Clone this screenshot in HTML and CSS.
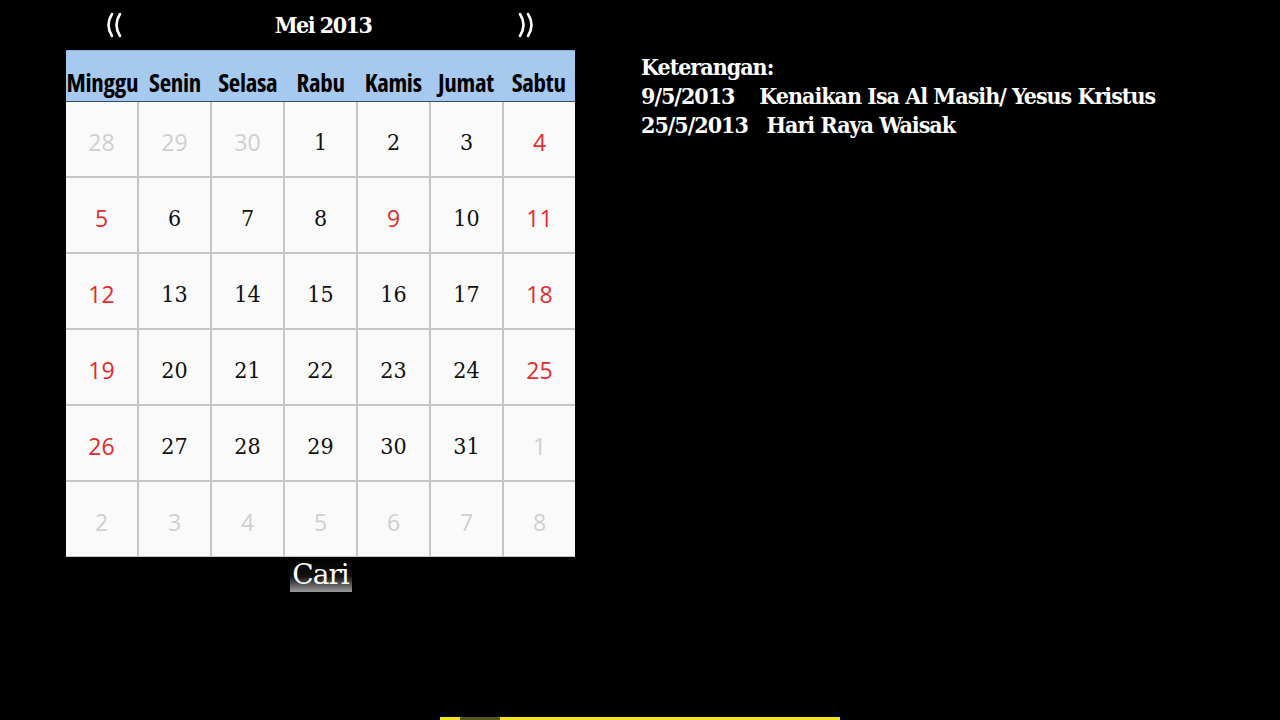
FILE: index.html
```html
<!DOCTYPE html>
<html>
<head>
<meta charset="utf-8">
<link rel="stylesheet" href="styles.css">
</head>
<body>
<div class="screen">
  <div class="left">
    <div class="nav">
      <span class="arrow"><svg width="18" height="26" viewBox="0 0 18 26"><path d="M7 2 Q0 13 7 24 M15 2 Q8 13 15 24" fill="none" stroke="#fff" stroke-width="2.6" stroke-linecap="round"/></svg></span>
      <span class="title">Mei 2013</span>
      <span class="arrow"><svg width="18" height="26" viewBox="0 0 18 26"><path d="M3 2 Q10 13 3 24 M11 2 Q18 13 11 24" fill="none" stroke="#fff" stroke-width="2.6" stroke-linecap="round"/></svg></span>
    </div>
    <div class="cal">
      <div class="head">
        <span>Minggu</span><span>Senin</span><span>Selasa</span><span>Rabu</span><span>Kamis</span><span>Jumat</span><span>Sabtu</span>
      </div>
      <div class="grid">
        <div class="c out">28</div><div class="c out">29</div><div class="c out">30</div><div class="c">1</div><div class="c">2</div><div class="c">3</div><div class="c red">4</div>
        <div class="c red">5</div><div class="c">6</div><div class="c">7</div><div class="c">8</div><div class="c red">9</div><div class="c">10</div><div class="c red">11</div>
        <div class="c red">12</div><div class="c">13</div><div class="c">14</div><div class="c">15</div><div class="c">16</div><div class="c">17</div><div class="c red">18</div>
        <div class="c red">19</div><div class="c">20</div><div class="c">21</div><div class="c">22</div><div class="c">23</div><div class="c">24</div><div class="c red">25</div>
        <div class="c red">26</div><div class="c">27</div><div class="c">28</div><div class="c">29</div><div class="c">30</div><div class="c">31</div><div class="c out">1</div>
        <div class="c out">2</div><div class="c out">3</div><div class="c out">4</div><div class="c out">5</div><div class="c out">6</div><div class="c out">7</div><div class="c out">8</div>
      </div>
    </div>
    <div class="btnrow"><button class="cari">Cari</button></div>
  </div>
  <div class="info">
    <div>Keterangan:</div>
    <div>9/5/2013&nbsp;&nbsp;&nbsp; Kenaikan Isa Al Masih/ Yesus Kristus</div>
    <div>25/5/2013&nbsp;&nbsp; Hari Raya Waisak</div>
  </div>
</div>
<div class="bottombar"><span class="dark"></span></div>
</body>
</html>
```
FILE: styles.css
```css
html, body {
  margin: 0;
  padding: 0;
  background: #000;
  width: 1280px;
  height: 720px;
  overflow: hidden;
  position: relative;
}
.screen {
  display: flex;
  padding-left: 66px;
}
.left {
  width: 509px;
  display: flex;
  flex-direction: column;
}
.nav {
  height: 50px;
  display: flex;
  align-items: center;
  justify-content: space-between;
  padding: 0 40px 0 39px;
  color: #fff;
}
.arrow {
  display: flex;
  width: 18px;
  height: 26px;
  margin-top: -1px;
}
.title {
  font-family: "DejaVu Serif Condensed", "DejaVu Serif", serif;
  font-weight: bold;
  font-size: 23px;
  letter-spacing: -1.5px;
  margin-left: 6px;
  margin-top: -2px;
}
.cal {
  background: #fafafa;
}
.head {
  height: 50px;
  background: #a6c9ef;
  border-top: 1px solid #8aaedc;
  border-bottom: 1px solid #3a4a60;
  display: grid;
  grid-template-columns: repeat(7, 1fr);
  align-items: center;
  font-family: "Open Sans", sans-serif;
  font-stretch: 75%;
  font-weight: bold;
  font-size: 25px;
  color: #000;
  text-align: center;
  letter-spacing: -0.3px;
}
.head span {
  padding-top: 12px;
}
.grid {
  display: grid;
  grid-template-columns: repeat(7, 71px);
  grid-auto-rows: 74px;
  gap: 2px;
  background: #c6c6c6;
  border-bottom: 1px solid #c6c6c6;
}
.c {
  background: #fafafa;
  display: flex;
  align-items: center;
  justify-content: center;
  padding-top: 5px;
  box-sizing: border-box;
  font-family: "DejaVu Serif Condensed", "DejaVu Serif", serif;
  font-size: 23px;
  color: #111;
}
.c.red {
  color: #e32b2b;
  font-family: "Open Sans", sans-serif;
  font-stretch: 95%;
  font-size: 23px;
}
.c.out {
  color: #cfcfcf;
  font-family: "Open Sans", sans-serif;
  font-stretch: 95%;
  font-size: 23px;
}
.btnrow {
  display: flex;
  justify-content: center;
}
.cari {
  width: 62px;
  height: 35px;
  border: none;
  padding: 0;
  background: linear-gradient(#000 0%, #111 55%, #9a9a9a 100%);
  color: #fff;
  font-family: "DejaVu Serif", serif;
  font-size: 28px;
  letter-spacing: -1px;
  line-height: 35px;
}
.info {
  margin-left: 66px;
  padding-top: 52px;
  color: #fff;
  font-family: "DejaVu Serif Condensed", "DejaVu Serif", serif;
  font-weight: bold;
  font-size: 23px;
  line-height: 29px;
  letter-spacing: -1px;
}
.bottombar {
  position: absolute;
  left: 440px;
  top: 717px;
  width: 400px;
  height: 3px;
  background: #f2e41e;
}
.bottombar .dark {
  display: block;
  margin-left: 20px;
  width: 40px;
  height: 3px;
  background: #5a5520;
}
```
